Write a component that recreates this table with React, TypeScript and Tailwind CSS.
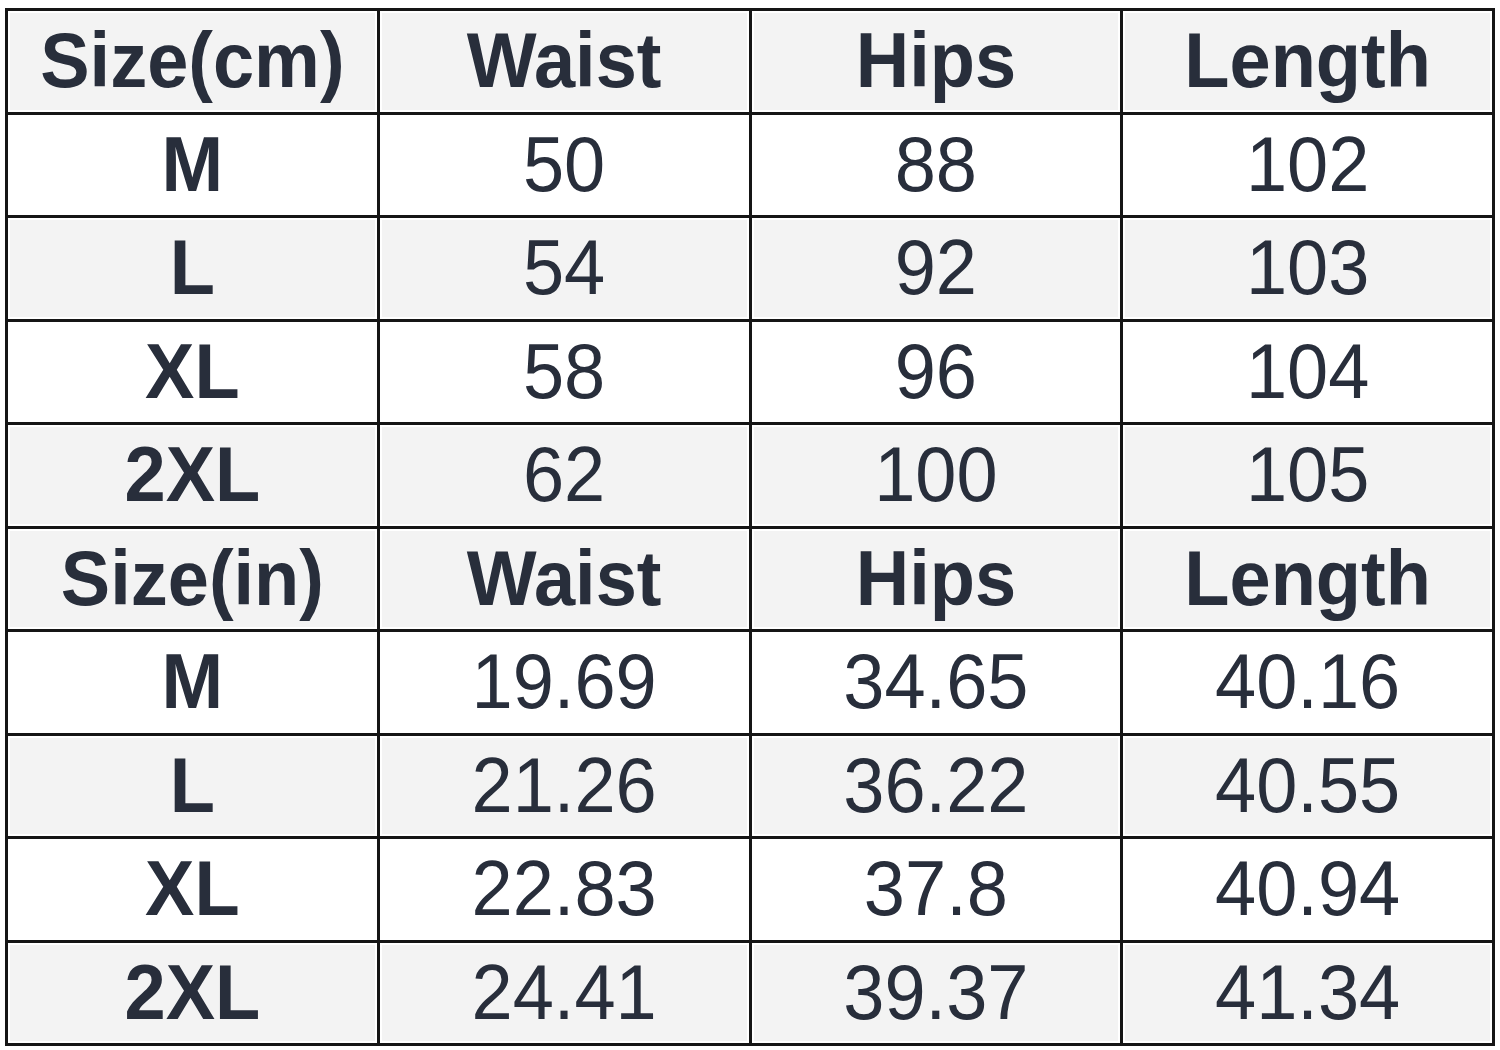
const cmRows = [
  ["M", "50", "88", "102"],
  ["L", "54", "92", "103"],
  ["XL", "58", "96", "104"],
  ["2XL", "62", "100", "105"],
];

const inRows = [
  ["M", "19.69", "34.65", "40.16"],
  ["L", "21.26", "36.22", "40.55"],
  ["XL", "22.83", "37.8", "40.94"],
  ["2XL", "24.41", "39.37", "41.34"],
];

type Row = { cells: string[]; header: boolean; gray: boolean };

const rows: Row[] = [
  { cells: ["Size(cm)", "Waist", "Hips", "Length"], header: true, gray: true },
  ...cmRows.map((cells, i) => ({ cells, header: false, gray: i % 2 === 1 })),
  { cells: ["Size(in)", "Waist", "Hips", "Length"], header: true, gray: true },
  ...inRows.map((cells, i) => ({ cells, header: false, gray: i % 2 === 1 })),
];

function Cell({ text, bold, gray }: { text: string; bold: boolean; gray: boolean }) {
  return (
    <div className="bg-white p-[2px] h-[100.5px]">
      <div
        className={`h-full w-full flex items-center justify-center text-[74px] leading-none text-[#282e3b] ${
          gray ? "bg-[#f3f3f3]" : "bg-white"
        } ${bold ? "font-bold" : "font-normal"}`}
      >
        <span className="inline-block scale-y-[1.05]">{text}</span>
      </div>
    </div>
  );
}

export default function App() {
  return (
    <div
      className="w-[1500px] h-[1050px] bg-white pt-[8px] pl-[5px]"
      style={{ fontFamily: '"Liberation Sans", Arial, sans-serif' }}
    >
      <div className="w-[1490px] grid grid-cols-4 gap-[3px] p-[3px] bg-[#151515]">
        {rows.map((row, r) =>
          row.cells.map((c, i) => (
            <Cell key={`${r}-${i}`} text={c} bold={row.header || i === 0} gray={row.gray} />
          ))
        )}
      </div>
    </div>
  );
}
